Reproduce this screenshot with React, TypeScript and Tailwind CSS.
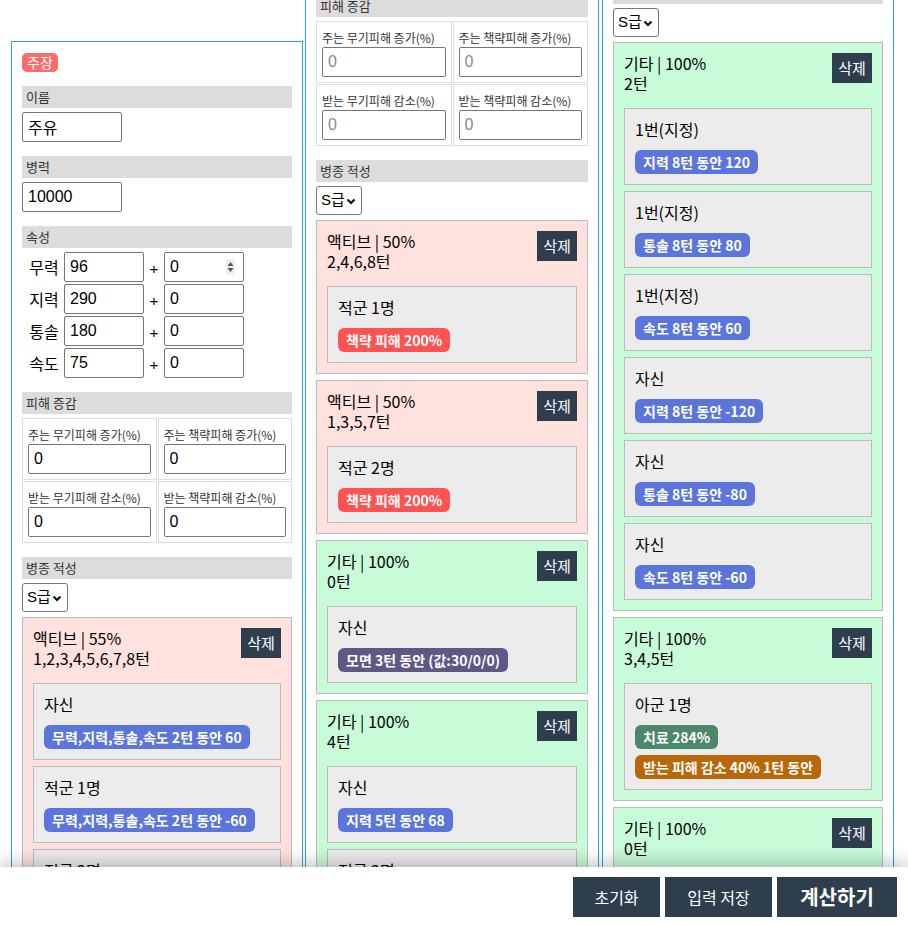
import React from "react";

type Badge = { text: string; color: string };
type Effect = { target: string; badges: Badge[] };
type Skill = { tone: string; title: string; turns: string; effects: Effect[] };

const KR = "font-['Noto_Sans_CJK_KR',sans-serif]";
const FIELD = "font-['Liberation_Sans','Noto_Sans_CJK_KR',sans-serif]";

const blue = "bg-[#5b75da]";
const red = "bg-[#ff5252]";
const purple = "bg-[#5d5884]";
const teal = "bg-[#4b8769]";
const orange = "bg-[#b86808]";
const pink = "bg-[#ffe1dd]";
const green = "bg-[#c8fcd9]";

const Header = ({ children, className = "" }: { children: React.ReactNode; className?: string }) => (
  <div className={`h-[22px] bg-[#dcdcdc] pl-[4px] text-[13px] leading-[22px] text-[#333] ${className}`}>{children}</div>
);

const Field = ({ value, placeholder, className = "" }: { value?: string; placeholder?: string; className?: string }) => (
  <input
    defaultValue={value}
    placeholder={placeholder}
    className={`h-[30px] rounded-[2px] border border-[#767676] bg-white px-[5px] text-[16px] text-black placeholder:text-[#8a8a8a] outline-none ${FIELD} ${className}`}
  />
);

const Spinner = () => (
  <svg width="9" height="16" viewBox="0 0 9 16" className="pointer-events-none absolute right-[9px] top-[7px]">
    <rect width="9" height="16" fill="#efefef" />
    <path d="M4.5 3 L7.5 7 L1.5 7 Z" fill="#555" />
    <path d="M4.5 13 L7.5 9 L1.5 9 Z" fill="#555" />
  </svg>
);

const SkillCard = ({ skill }: { skill: Skill }) => (
  <div className={`border border-[#bbb] p-[10px] ${skill.tone}`}>
    <div className="flex items-start justify-between">
      <div className="text-[16px] leading-[20px] text-black">
        <div>{skill.title}</div>
        <div>{skill.turns}</div>
      </div>
      <button className="h-[30px] w-[40px] bg-[#2f3e4d] text-[15px] text-white">삭제</button>
    </div>
    <div className="mt-[15px] flex flex-col gap-[6px]">
      {skill.effects.map((e, i) => (
        <div key={i} className="border border-[#bbb] bg-[#ececec] p-[10px]">
          <div className="text-[16px] leading-[20px] text-black">{e.target}</div>
          <div className="mt-[11px] flex flex-col items-start gap-[6px]">
            {e.badges.map((b, j) => (
              <span key={j} className={`h-[24px] rounded-[6px] px-[8px] text-[14px] font-bold leading-[24px] text-white ${b.color}`}>
                {b.text}
              </span>
            ))}
          </div>
        </div>
      ))}
    </div>
  </div>
);

type ColumnProps = {
  role: string;
  name: string;
  troops: string;
  stats: [string, string, string][];
  dmg?: string;
  skills: Skill[];
  spinner?: boolean;
  className: string;
};

const dmgLabels = ["주는 무기피해 증가(%)", "주는 책략피해 증가(%)", "받는 무기피해 감소(%)", "받는 책략피해 감소(%)"];

const Column = ({ role, name, troops, stats, dmg, skills, spinner, className }: ColumnProps) => (
  <div className={`shrink-0 border border-[#2a9df4] p-[10px] ${className}`}>
    <div className="flex">
      <span className="mt-[1px] h-[19px] rounded-[5px] bg-[#ff6b6b] px-[5px] text-[14px] leading-[19px] text-white">{role}</span>
    </div>

    <Header className="mt-[14px]">이름</Header>
    <Field value={name} className="mt-[4px] w-[100px]" />

    <Header className="mt-[14px]">병력</Header>
    <Field value={troops} className="mt-[4px] w-[100px]" />

    <Header className="mt-[14px]">속성</Header>
    <div className="mt-[4px] flex flex-col gap-[2px]">
      {stats.map(([label, base, bonus], i) => (
        <div key={label} className="flex h-[30px] items-center">
          <span className="w-[42px] pl-[2px] text-center text-[16px] text-black">{label}</span>
          <Field value={base} className="w-[80px]" />
          <span className={`w-[20px] pt-[4px] text-center text-[15px] text-black ${FIELD}`}>+</span>
          <div className="relative">
            <Field value={bonus} className="w-[80px]" />
            {spinner && i === 0 && <Spinner />}
          </div>
        </div>
      ))}
    </div>

    <Header className="mt-[14px]">피해 증감</Header>
    <div className="mt-[4px] grid grid-cols-2 gap-px">
      {dmgLabels.map((l) => (
        <div key={l} className="border border-[#ddd] px-[5px] pb-[5px] pt-[6px]">
          <div className="text-[12px] leading-[19px] text-[#333]">{l}</div>
          <Field value={dmg} placeholder="0" className="w-full" />
        </div>
      ))}
    </div>

    <Header className="mt-[14px]">병종 적성</Header>
    <div className="relative mt-[4px] w-[46px]">
      <select
        defaultValue="S"
        className={`h-[29px] w-[46px] appearance-none rounded-[3px] border border-[#767676] bg-white pl-[4px] text-[15px] text-black outline-none ${FIELD}`}
      >
        <option value="S">S급</option>
        <option value="A">A급</option>
        <option value="B">B급</option>
      </select>
      <svg width="10" height="7" viewBox="0 0 10 7" className="pointer-events-none absolute right-[6px] top-[12px]">
        <path d="M1.5 1.5 L5 5 L8.5 1.5" fill="none" stroke="#111" strokeWidth="2.2" />
      </svg>
    </div>

    <div className="mt-[5px] flex flex-col gap-[6px]">
      {skills.map((s, i) => (
        <SkillCard key={i} skill={s} />
      ))}
    </div>
  </div>
);

const statsOf = (a: string, b: string, c: string, d: string): [string, string, string][] => [
  ["무력", a, "0"],
  ["지력", b, "0"],
  ["통솔", c, "0"],
  ["속도", d, "0"],
];

const allStat = (v: string): Badge => ({ text: `무력,지력,통솔,속도 2턴 동안 ${v}`, color: blue });

const leftSkills: Skill[] = [
  {
    tone: pink,
    title: "액티브 | 55%",
    turns: "1,2,3,4,5,6,7,8턴",
    effects: [
      { target: "자신", badges: [allStat("60")] },
      { target: "적군 1명", badges: [allStat("-60")] },
      { target: "적군 2명", badges: [allStat("-60")] },
    ],
  },
];

const midSkills: Skill[] = [
  {
    tone: pink,
    title: "액티브 | 50%",
    turns: "2,4,6,8턴",
    effects: [{ target: "적군 1명", badges: [{ text: "책략 피해 200%", color: red }] }],
  },
  {
    tone: pink,
    title: "액티브 | 50%",
    turns: "1,3,5,7턴",
    effects: [{ target: "적군 2명", badges: [{ text: "책략 피해 200%", color: red }] }],
  },
  {
    tone: green,
    title: "기타 | 100%",
    turns: "0턴",
    effects: [{ target: "자신", badges: [{ text: "모면 3턴 동안 (값:30/0/0)", color: purple }] }],
  },
  {
    tone: green,
    title: "기타 | 100%",
    turns: "4턴",
    effects: [
      { target: "자신", badges: [{ text: "지력 5턴 동안 68", color: blue }] },
      { target: "적군 2명", badges: [{ text: "지력 5턴 동안 -68", color: blue }] },
    ],
  },
];

const rightSkills: Skill[] = [
  {
    tone: green,
    title: "기타 | 100%",
    turns: "2턴",
    effects: [
      { target: "1번(지정)", badges: [{ text: "지력 8턴 동안 120", color: blue }] },
      { target: "1번(지정)", badges: [{ text: "통솔 8턴 동안 80", color: blue }] },
      { target: "1번(지정)", badges: [{ text: "속도 8턴 동안 60", color: blue }] },
      { target: "자신", badges: [{ text: "지력 8턴 동안 -120", color: blue }] },
      { target: "자신", badges: [{ text: "통솔 8턴 동안 -80", color: blue }] },
      { target: "자신", badges: [{ text: "속도 8턴 동안 -60", color: blue }] },
    ],
  },
  {
    tone: green,
    title: "기타 | 100%",
    turns: "3,4,5턴",
    effects: [
      {
        target: "아군 1명",
        badges: [
          { text: "치료 284%", color: teal },
          { text: "받는 피해 감소 40% 1턴 동안", color: orange },
        ],
      },
    ],
  },
  {
    tone: green,
    title: "기타 | 100%",
    turns: "0턴",
    effects: [{ target: "자신", badges: [{ text: "모면 3턴 동안 (값:30/0/0)", color: purple }] }],
  },
];

export default function App() {
  return (
    <div className={`relative h-screen overflow-hidden bg-white text-black ${KR}`}>
      <div className="flex items-start pl-[11px]">
        <Column
          role="주장"
          name="주유"
          troops="10000"
          stats={statsOf("96", "290", "180", "75")}
          dmg="0"
          skills={leftSkills}
          spinner
          className="mt-[41px] w-[292px]"
        />
        <Column
          role="부장"
          name="제갈량"
          troops="10000"
          stats={statsOf("70", "310", "190", "80")}
          skills={midSkills}
          className="-mt-[356px] ml-[2px] w-[294px]"
        />
        <Column
          role="부장"
          name="노숙"
          troops="10000"
          stats={statsOf("60", "280", "200", "70")}
          skills={rightSkills}
          className="-mt-[534px] ml-[3px] w-[292px]"
        />
      </div>

      <div className="fixed inset-x-0 bottom-0 flex h-[59px] items-start justify-end gap-[5px] bg-white pr-[11px] pt-[10px] shadow-[0_-5px_16px_rgba(0,0,0,0.22)]">
        <button className="h-[40px] w-[87px] bg-[#2f3e4d] text-[16px] text-white">초기화</button>
        <button className="h-[40px] w-[107px] bg-[#2f3e4d] text-[16px] text-white">입력 저장</button>
        <button className="h-[40px] w-[120px] bg-[#2f3e4d] text-[20px] font-bold text-white">계산하기</button>
      </div>
    </div>
  );
}
